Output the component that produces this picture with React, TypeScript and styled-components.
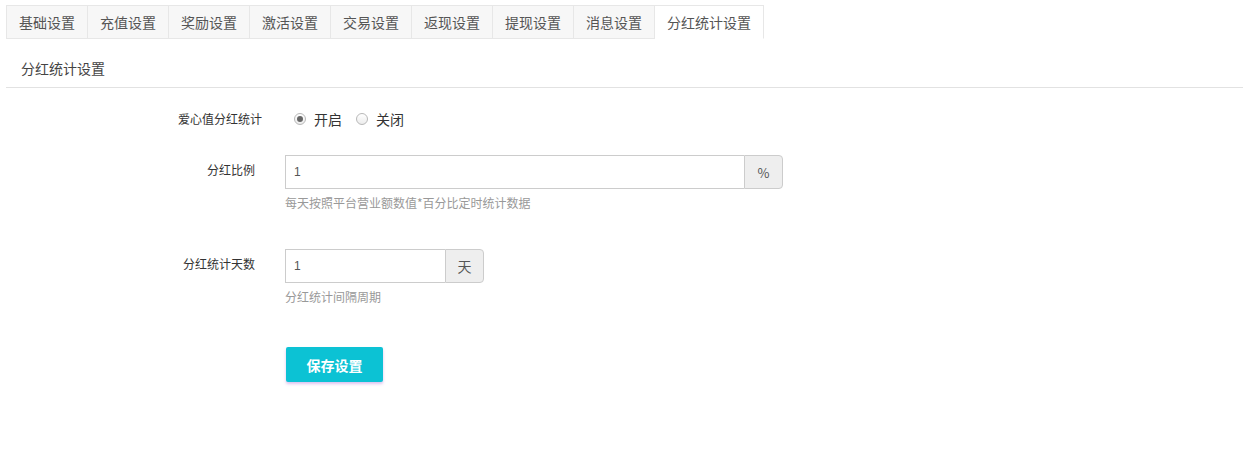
import React, { useState } from "react";
import styled, { createGlobalStyle } from "styled-components";

const GlobalStyle = createGlobalStyle`
  html, body {
    margin: 0;
    padding: 0;
    background: #fff;
  }
  body {
    font-family: "Noto Sans CJK SC", "Liberation Sans", sans-serif;
    color: #333;
  }
  * {
    box-sizing: border-box;
  }
`;

const Page = styled.div`
  padding: 5px 1px 0 6px;
  width: 1244px;
  height: 464px;
`;

const TabBar = styled.ul`
  display: flex;
  list-style: none;
  margin: 0;
  padding: 0;
`;

const Tab = styled.li<{ $active?: boolean }>`
  height: 34px;
  line-height: 32px;
  padding: 0 12px;
  font-size: 14px;
  color: #555;
  border: 1px solid #e7e7e7;
  border-left: none;
  border-bottom-color: ${(p) => (p.$active ? "transparent" : "#e7e7e7")};
  background: ${(p) => (p.$active ? "#fff" : "#f7f7f7")};
  cursor: pointer;

  &:first-child {
    border-left: 1px solid #e7e7e7;
  }
`;

const PanelTitle = styled.div`
  padding: 0 15px;
  height: 49px;
  line-height: 58px;
  font-size: 14px;
  color: #444;
  border-bottom: 1px solid #e2e2e2;
`;

const Form = styled.form`
  padding-top: 19px;
`;

const Row = styled.div<{ $gap: number }>`
  display: flex;
  margin-bottom: ${(p) => p.$gap}px;
`;

const Label = styled.label<{ $top: number; $width?: number }>`
  width: ${(p) => p.$width ?? 249}px;
  padding-top: ${(p) => p.$top}px;
  text-align: right;
  font-size: 12px;
  color: #333;
  flex-shrink: 0;
`;

const Field = styled.div<{ $width: number; $offset?: number }>`
  margin-left: ${(p) => p.$offset ?? 30}px;
  width: ${(p) => p.$width}px;
`;

const RadioGroup = styled.div`
  display: flex;
  align-items: center;
  height: 24px;
  padding-left: 9px;
  gap: 14px;
`;

const RadioItem = styled.span`
  display: inline-flex;
  align-items: center;
  font-size: 14px;
  color: #333;
  cursor: pointer;
`;

const RadioDot = styled.span<{ $checked?: boolean }>`
  width: 12px;
  height: 12px;
  border-radius: 50%;
  border: 1px solid #b8b8b8;
  background: linear-gradient(#fff, #ececec);
  margin-right: 8px;
  display: inline-flex;
  align-items: center;
  justify-content: center;

  &::after {
    content: "";
    width: 6px;
    height: 6px;
    border-radius: 50%;
    background: ${(p) => (p.$checked ? "#666" : "transparent")};
  }
`;

const InputGroup = styled.div`
  display: flex;
  height: 34px;
`;

const Input = styled.input`
  flex: 1;
  min-width: 0;
  height: 34px;
  border: 1px solid #ccc;
  border-right: none;
  padding: 0 8px;
  font-size: 12px;
  color: #555;
  font-family: "Liberation Sans", sans-serif;
  outline: none;
`;

const Addon = styled.span<{ $size: number }>`
  width: 39px;
  display: flex;
  align-items: center;
  justify-content: center;
  border: 1px solid #ccc;
  border-radius: 0 4px 4px 0;
  background: #eee;
  color: #555;
  font-size: ${(p) => p.$size}px;
`;

const Help = styled.div`
  margin-top: 5px;
  font-size: 12px;
  color: #999;
`;

const SaveButton = styled.button`
  margin-left: 280px;
  width: 97px;
  height: 35px;
  border: none;
  border-radius: 2px;
  background: #0cc2d4;
  color: #fff;
  font-size: 14px;
  font-weight: bold;
  font-family: "Noto Sans CJK SC", sans-serif;
  box-shadow: 0 2px 3px rgba(180, 120, 220, 0.45);
  cursor: pointer;
`;

const tabs = [
  "基础设置",
  "充值设置",
  "奖励设置",
  "激活设置",
  "交易设置",
  "返现设置",
  "提现设置",
  "消息设置",
  "分红统计设置",
];

export default function App() {
  const [enabled, setEnabled] = useState(true);

  return (
    <>
      <GlobalStyle />
      <Page>
        <TabBar>
          {tabs.map((t) => (
            <Tab key={t} $active={t === "分红统计设置"}>
              {t}
            </Tab>
          ))}
        </TabBar>
        <PanelTitle>分红统计设置</PanelTitle>

        <Form onSubmit={(e) => e.preventDefault()}>
          <Row $gap={24}>
            <Label $top={3} $width={256}>
              爱心值分红统计
            </Label>
            <Field $width={300} $offset={23}>
              <RadioGroup>
                <RadioItem onClick={() => setEnabled(true)}>
                  <RadioDot $checked={enabled} />
                  开启
                </RadioItem>
                <RadioItem onClick={() => setEnabled(false)}>
                  <RadioDot $checked={!enabled} />
                  关闭
                </RadioItem>
              </RadioGroup>
            </Field>
          </Row>

          <Row $gap={38}>
            <Label $top={6}>分红比例</Label>
            <Field $width={498}>
              <InputGroup>
                <Input defaultValue="1" />
                <Addon $size={13}>%</Addon>
              </InputGroup>
              <Help>每天按照平台营业额数值*百分比定时统计数据</Help>
            </Field>
          </Row>

          <Row $gap={42}>
            <Label $top={6}>分红统计天数</Label>
            <Field $width={199}>
              <InputGroup>
                <Input defaultValue="1" />
                <Addon $size={14}>天</Addon>
              </InputGroup>
              <Help>分红统计间隔周期</Help>
            </Field>
          </Row>

          <SaveButton type="submit">保存设置</SaveButton>
        </Form>
      </Page>
    </>
  );
}
